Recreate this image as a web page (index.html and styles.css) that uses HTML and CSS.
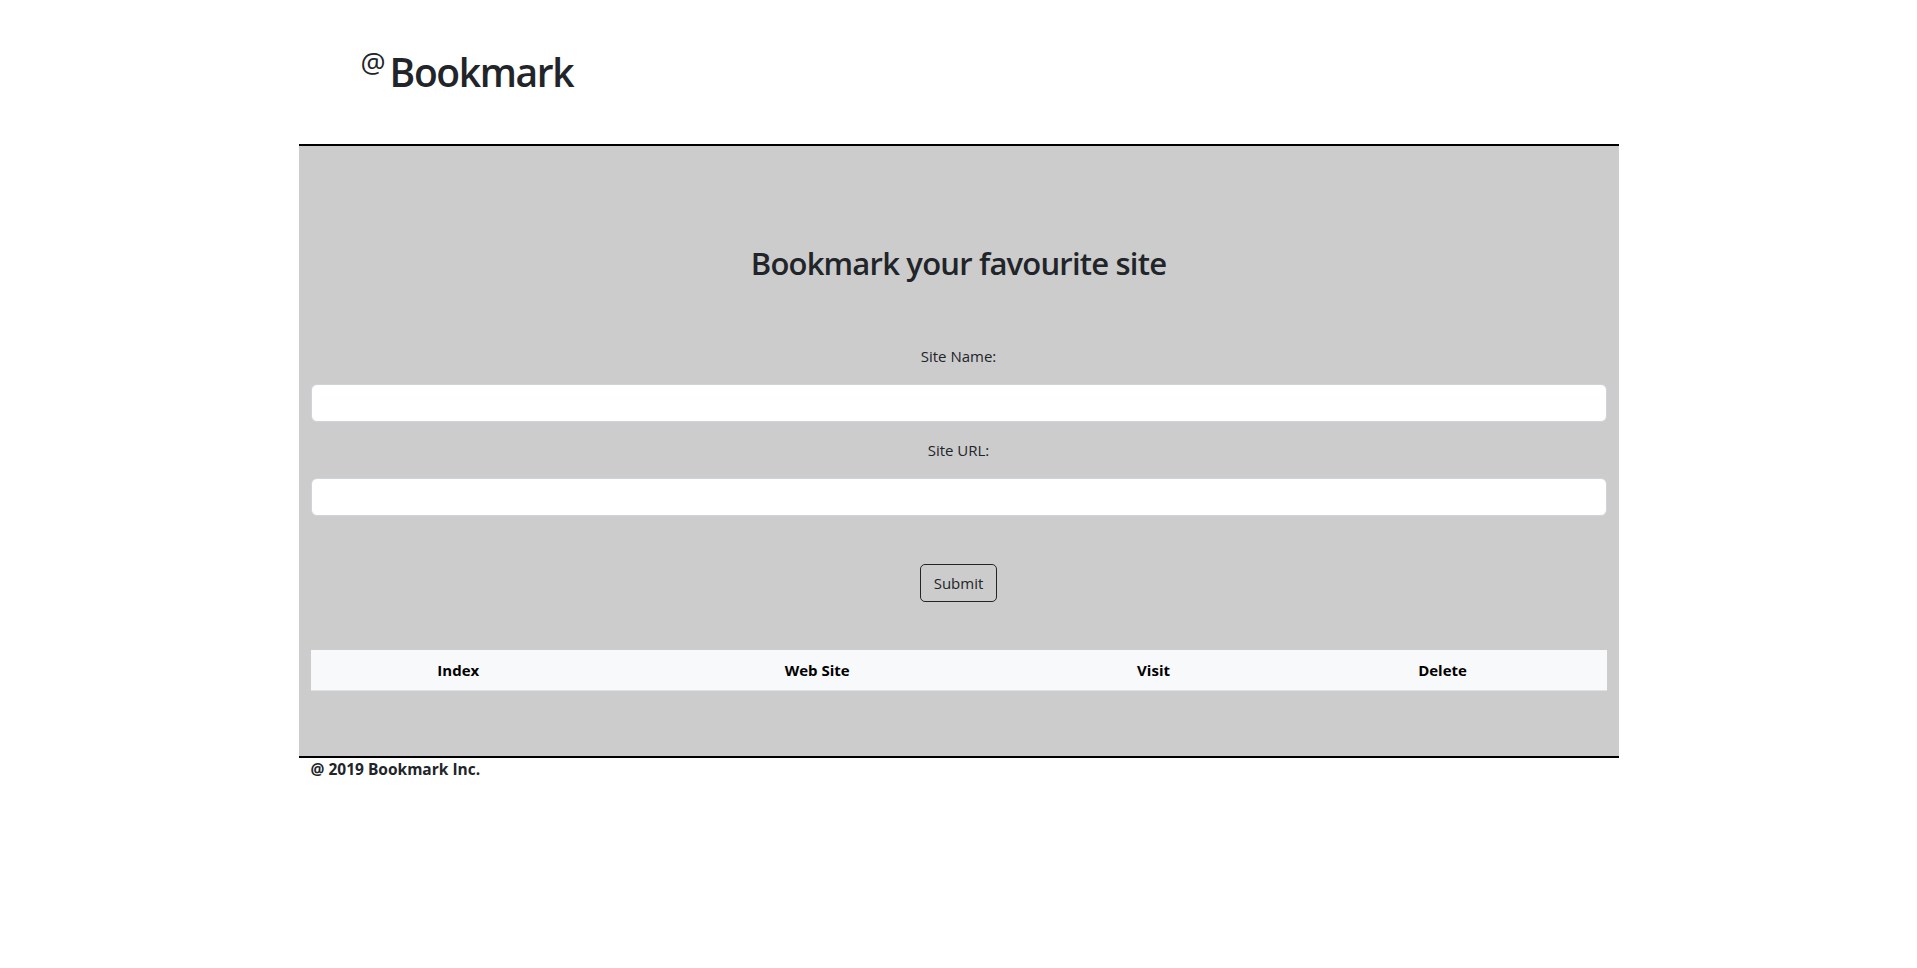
FILE: index.html
```html
<!DOCTYPE html>
<html lang="en">
<head>
<meta charset="utf-8">
<title>Bookmark</title>
<link rel="stylesheet" href="styles.css">
</head>
<body>
<div class="container">
  <header class="site-header">
    <h1 class="brand"><sup class="brand-at">@</sup>Bookmark</h1>
  </header>
  <main class="panel">
    <h2 class="panel-title">Bookmark your favourite site</h2>
    <form class="bm-form">
      <label class="form-label" for="siteName">Site Name:</label>
      <input class="form-control" id="siteName" type="text">
      <label class="form-label form-label-second" for="siteUrl">Site URL:</label>
      <input class="form-control" id="siteUrl" type="text">
      <div class="form-actions">
        <button type="button" class="btn-submit">Submit</button>
      </div>
    </form>
    <table class="bm-table">
      <thead>
        <tr>
          <th class="col-index">Index</th>
          <th class="col-site">Web Site</th>
          <th class="col-visit">Visit</th>
          <th class="col-delete">Delete</th>
        </tr>
      </thead>
      <tbody></tbody>
    </table>
  </main>
  <footer class="site-footer">@ 2019 Bookmark Inc.</footer>
</div>
</body>
</html>
```

FILE: styles.css
```css
* {
  box-sizing: border-box;
}

body {
  margin: 0;
  font-family: "Open Sans", "Noto Sans", "Liberation Sans", sans-serif;
  font-size: 16px;
  line-height: 1.5;
  color: #212529;
  background: #fff;
}

.container {
  width: 1320px;
  margin: 0 auto;
}

.site-header {
  height: 144px;
  padding: 48px 0 0 62px;
}

.brand {
  margin: 0;
  font-size: 39px;
  font-weight: 600;
  line-height: 1.23;
  letter-spacing: -1.4px;
}

.brand-at {
  font-size: 28px;
  font-weight: 400;
  vertical-align: 14px;
  line-height: 0;
  margin-right: 4px;
  letter-spacing: 0;
}

.panel {
  background: #cccccc;
  border-top: 2px solid #000;
  border-bottom: 2px solid #000;
  padding: 98px 12px 65px;
}

.panel-title {
  margin: 0;
  font-size: 31px;
  font-weight: 600;
  line-height: 1.24;
  text-align: center;
  letter-spacing: -0.8px;
}

.bm-form {
  display: flex;
  flex-direction: column;
  padding-top: 62px;
}

.form-label {
  display: block;
  text-align: center;
  font-size: 15px;
  line-height: 24px;
  margin-bottom: 16px;
}

.form-label-second {
  margin-top: 16px;
}

.form-control {
  display: block;
  width: 100%;
  height: 38px;
  padding: 6px 12px;
  font: inherit;
  color: #212529;
  background: #fff;
  border: 1px solid #ced4da;
  border-radius: 6px;
}

.form-actions {
  display: flex;
  justify-content: center;
  padding-top: 48px;
}

.btn-submit {
  height: 38px;
  padding: 0 13px;
  font-family: inherit;
  font-size: 15px;
  color: #212529;
  background: transparent;
  border: 1px solid #212529;
  border-radius: 5px;
}

.bm-table {
  width: 100%;
  margin-top: 48px;
  border-collapse: collapse;
  table-layout: fixed;
}

.bm-table th {
  height: 40px;
  padding: 0 8px;
  background: #f8f9fa;
  color: #000;
  font-size: 15px;
  font-weight: 700;
  text-align: center;
  border-bottom: 1px solid #dee2e6;
}

.col-index { width: 22.8%; }
.col-site { width: 32.6%; }
.col-visit { width: 19.3%; }
.col-delete { width: 25.3%; }

.site-footer {
  padding: 1px 12px 0;
  font-size: 15.5px;
  font-weight: 700;
  line-height: 21px;
}
```
